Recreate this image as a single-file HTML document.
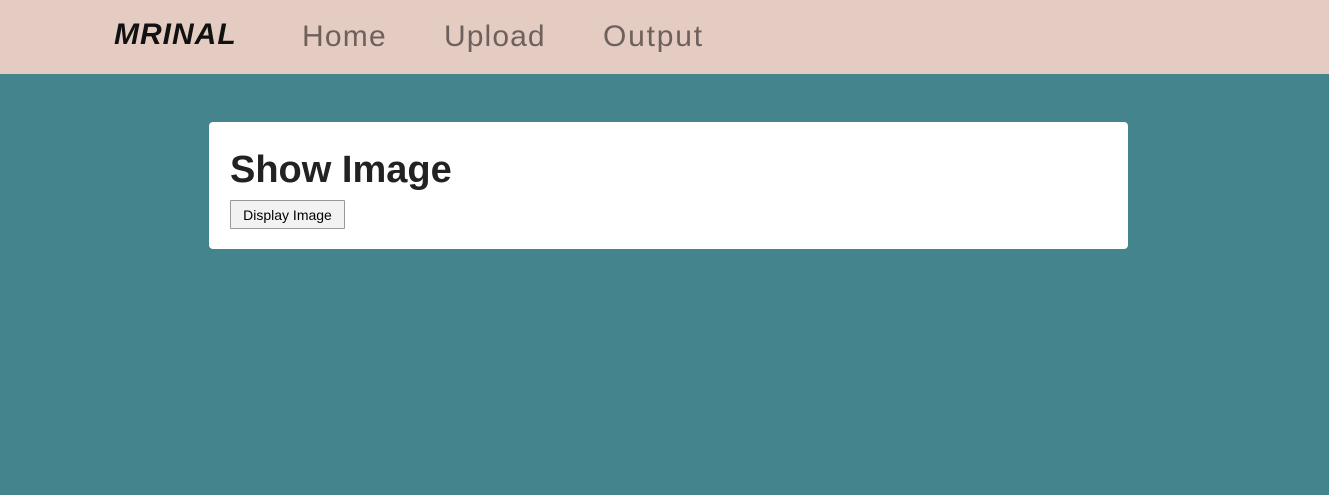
<!DOCTYPE html>
<html><head><meta charset="utf-8"><style>
html,body{margin:0;padding:0;width:1329px;height:495px;overflow:hidden;background:#44848c;font-family:"Liberation Sans",sans-serif;}
nav{height:74px;background:#e4ccc3;position:relative;}
.brand{position:absolute;left:114px;top:18px;font-size:30px;font-weight:bold;font-style:italic;color:#111;letter-spacing:1px;}
.lnk{position:absolute;top:20px;font-size:30px;color:#6e605c;}
.card{position:absolute;left:209px;top:122px;width:919px;height:127px;background:#fff;border-radius:4px;}
h1{position:absolute;left:21px;top:27px;margin:0;font-size:38px;font-weight:bold;color:#222;letter-spacing:0px;}
button{position:absolute;left:21px;top:78px;height:29px;width:115px;padding:0;font-family:"Liberation Sans",sans-serif;font-size:14px;background:#f2f2f2;border:1px solid #999;border-radius:1px;color:#000;}
</style></head><body>
<nav><span class="brand">MRINAL</span><span class="lnk" style="left:302px;letter-spacing:1.2px">Home</span><span class="lnk" style="left:444px;letter-spacing:1.1px">Upload</span><span class="lnk" style="left:603px;letter-spacing:1.8px">Output</span></nav>
<div class="card"><h1>Show Image</h1><button>Display Image</button></div>
</body></html>
